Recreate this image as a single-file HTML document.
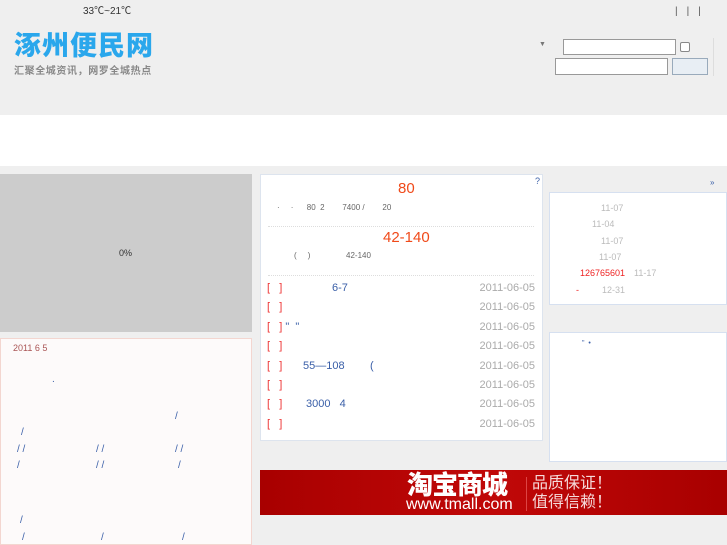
<!DOCTYPE html>
<html><head><meta charset="utf-8"><style>
*{margin:0;padding:0;box-sizing:border-box}
body{width:727px;height:545px;overflow:hidden;background:#efefef;font-family:"Liberation Sans","Noto Sans CJK SC",sans-serif;font-size:10px;position:relative}
.a{position:absolute}
.d{color:#aaa;font-size:11px}
.r{color:#e33;font-size:11px}
.b{color:#3a5fa8;font-size:11px}
.s{color:#3a5fa8;font-size:10px}
</style></head><body>
<div class="a" style="left:0;top:0;width:727px;height:115px;background:#efefef"></div>
<div class="a" style="left:83px;top:2px;font-size:10px;color:#333">33℃~21℃</div>
<div class="a" style="left:14px;top:30px;font-size:27px;font-weight:900;color:#2aa7ec;letter-spacing:1px;line-height:32px">涿州便民网</div>
<div class="a" style="left:14px;top:62px;font-size:10px;font-weight:bold;color:#888;letter-spacing:0.6px">汇聚全城资讯，网罗全城热点</div>
<div class="a" style="left:675px;top:6px;font-size:10px;color:#555;letter-spacing:9px">|||</div>
<div class="a" style="left:539px;top:41px;font-size:7px;color:#777">▼</div>
<div class="a" style="left:563px;top:39px;width:113px;height:16px;background:#fff;border:1px solid #999"></div>
<div class="a" style="left:680px;top:42px;width:10px;height:10px;background:#fff;border:1px solid #888;border-radius:2px"></div>
<div class="a" style="left:555px;top:58px;width:113px;height:17px;background:#fff;border:1px solid #999"></div>
<div class="a" style="left:672px;top:58px;width:36px;height:17px;background:#e8eef4;border:1px solid #9ab"></div>
<div class="a" style="left:713px;top:38px;width:1px;height:38px;background:#ddd"></div>
<div class="a" style="left:0;top:115px;width:727px;height:51px;background:#fff"></div>

<div class="a" style="left:0;top:174px;width:252px;height:158px;background:#ccc"></div>
<div class="a" style="left:119px;top:248px;font-size:9px;color:#333">0%</div>

<div class="a" style="left:0;top:338px;width:252px;height:207px;background:#fdfafa;border:1px solid #f3d6d0"></div>
<div class="a" style="left:13px;top:343px;font-size:9px;color:#a55">2011 6 5</div>
<div class="a s" style="left:52px;top:374px">.</div>
<div class="a s" style="left:175px;top:411px">/</div>
<div class="a s" style="left:21px;top:427px">/</div>
<div class="a s" style="left:17px;top:444px">/ /</div>
<div class="a s" style="left:96px;top:444px">/ /</div>
<div class="a s" style="left:175px;top:444px">/ /</div>
<div class="a s" style="left:17px;top:460px">/</div>
<div class="a s" style="left:96px;top:460px">/ /</div>
<div class="a s" style="left:178px;top:460px">/</div>
<div class="a s" style="left:20px;top:515px">/</div>
<div class="a s" style="left:22px;top:532px">/</div>
<div class="a s" style="left:101px;top:532px">/</div>
<div class="a s" style="left:182px;top:532px">/</div>

<div class="a" style="left:260px;top:174px;width:283px;height:267px;background:#fff;border:1px solid #dde4ee"></div>
<div class="a b" style="left:535px;top:176px;font-size:9px">?</div>
<div class="a" style="left:398px;top:180px;font-size:15px;color:#f04a1a">80</div>
<div class="a" style="left:277px;top:203px;font-size:8px;color:#666;white-space:pre">·     ·      80  2        7400 /        20</div>
<div class="a" style="left:268px;top:226px;width:266px;border-top:1px dotted #ddd"></div>
<div class="a" style="left:383px;top:229px;font-size:15px;color:#f04a1a">42-140</div>
<div class="a" style="left:294px;top:251px;font-size:8px;color:#666;white-space:pre">(     )                42-140</div>
<div class="a" style="left:268px;top:275px;width:266px;border-top:1px dotted #ddd"></div>
<div class="a" style="left:267px;top:279px;width:268px;line-height:19.4px">
<div style="position:relative"><span class="r">[&nbsp;&nbsp;&nbsp;]</span><span class="b" style="position:absolute;left:65px">6-7</span><span class="d" style="float:right">2011-06-05</span></div>
<div><span class="r">[&nbsp;&nbsp;&nbsp;]</span><span class="d" style="float:right">2011-06-05</span></div>
<div><span class="r">[&nbsp;&nbsp;&nbsp;]</span><span class="b"> " &nbsp;"</span><span class="d" style="float:right">2011-06-05</span></div>
<div><span class="r">[&nbsp;&nbsp;&nbsp;]</span><span class="d" style="float:right">2011-06-05</span></div>
<div style="position:relative"><span class="r">[&nbsp;&nbsp;&nbsp;]</span><span class="b" style="position:absolute;left:36px">55—108</span><span class="b" style="position:absolute;left:103px">(</span><span class="d" style="float:right">2011-06-05</span></div>
<div><span class="r">[&nbsp;&nbsp;&nbsp;]</span><span class="d" style="float:right">2011-06-05</span></div>
<div style="position:relative"><span class="r">[&nbsp;&nbsp;&nbsp;]</span><span class="b" style="position:absolute;left:39px">3000 &nbsp;&nbsp;4</span><span class="d" style="float:right">2011-06-05</span></div>
<div><span class="r">[&nbsp;&nbsp;&nbsp;]</span><span class="d" style="float:right">2011-06-05</span></div>
</div>

<div class="a s" style="left:710px;top:178px;font-size:8px">»</div>
<div class="a" style="left:549px;top:192px;width:178px;height:113px;background:#fff;border:1px solid #d6e0f0"></div>
<div class="a" style="font-size:9px;color:#bbb;left:601px;top:203px">11-07</div>
<div class="a" style="font-size:9px;color:#bbb;left:592px;top:219px">11-04</div>
<div class="a" style="font-size:9px;color:#bbb;left:601px;top:236px">11-07</div>
<div class="a" style="font-size:9px;color:#bbb;left:599px;top:252px">11-07</div>
<div class="a" style="font-size:9px;color:#e22;left:580px;top:268px">126765601</div>
<div class="a" style="font-size:9px;color:#bbb;left:634px;top:268px">11-17</div>
<div class="a" style="font-size:9px;color:#e22;left:576px;top:285px">-</div>
<div class="a" style="font-size:9px;color:#bbb;left:602px;top:285px">12-31</div>

<div class="a" style="left:549px;top:332px;width:178px;height:130px;background:#fff;border:1px solid #d6e0f0"></div>
<div class="a s" style="left:582px;top:340px;font-size:7px">" &nbsp;•</div>

<div class="a" style="left:260px;top:470px;width:467px;height:45px;background:linear-gradient(90deg,#a80000,#c00808 50%,#a80000)"></div>
<div class="a" style="left:407px;top:471px;font-size:26px;font-weight:900;color:#fff;line-height:28px;letter-spacing:-1px">淘宝商城</div>
<div class="a" style="left:406px;top:496px;font-size:16px;color:#fff;line-height:17px">www.tmall.com</div>
<div class="a" style="left:526px;top:477px;width:1px;height:34px;background:#d44"></div>
<div class="a" style="left:532px;top:474px;font-size:16px;color:#f6dada;line-height:19px">品质保证！<br>值得信赖！</div>
</body></html>
